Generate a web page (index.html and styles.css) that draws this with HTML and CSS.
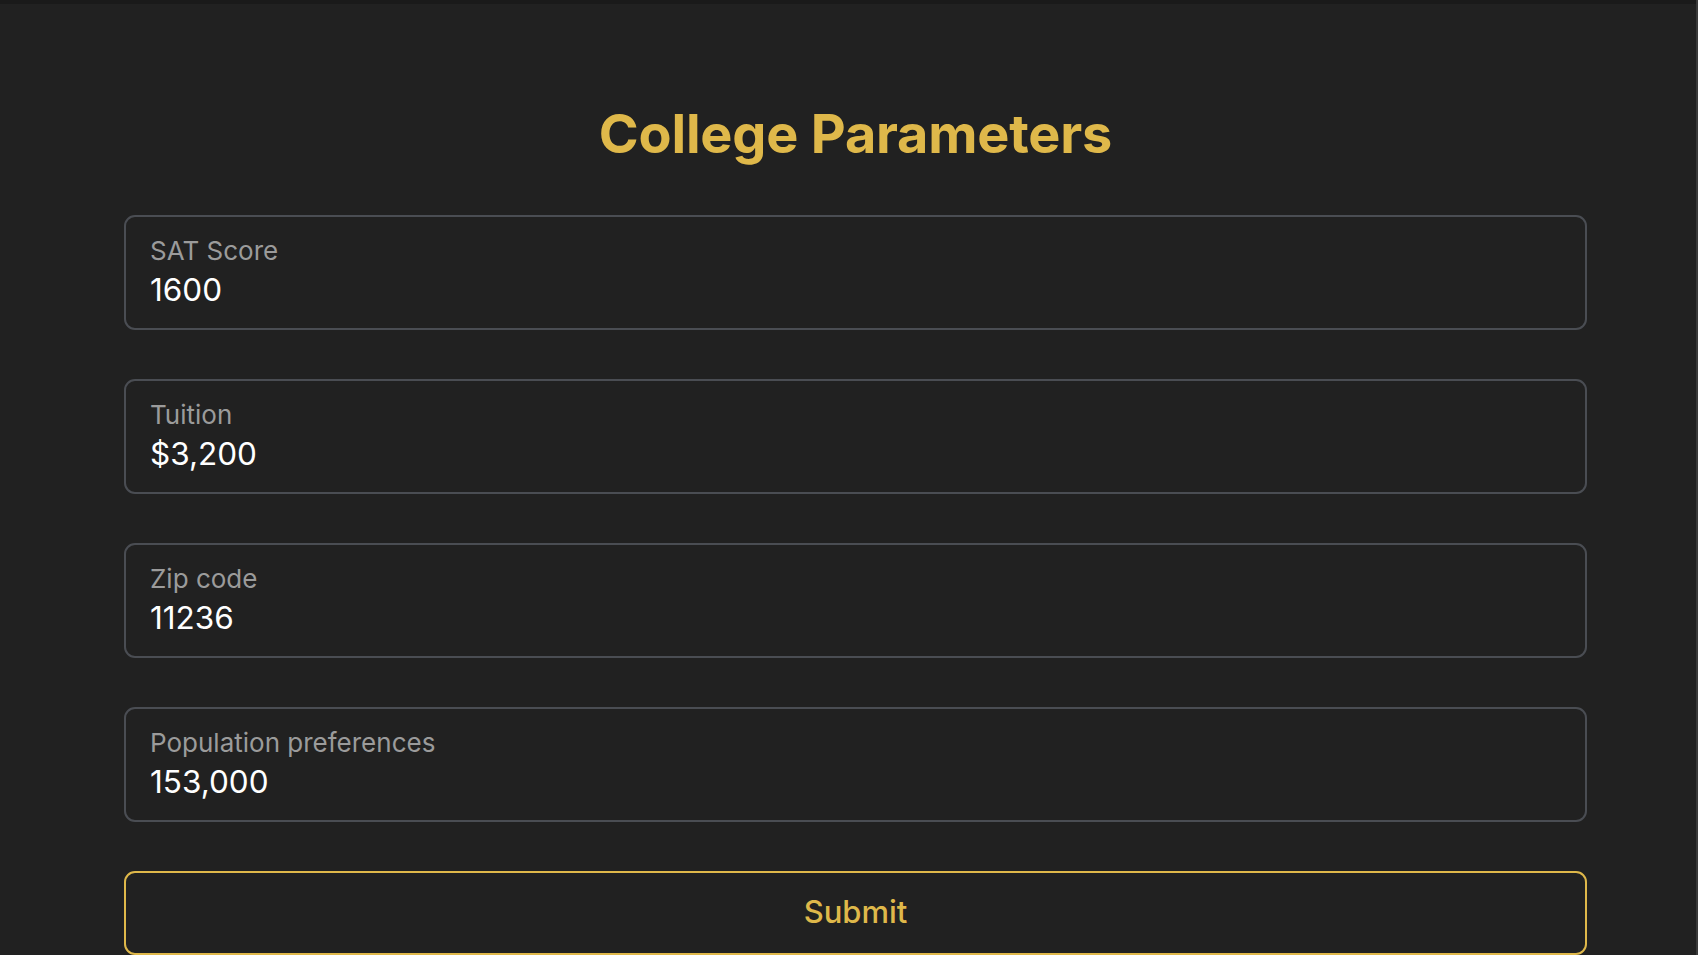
FILE: index.html
```html
<!DOCTYPE html>
<html>
<head>
<meta charset="utf-8">
<link rel="stylesheet" href="styles.css">
</head>
<body>
<div class="topbar"></div>
<main class="page">
  <h1 class="title">College Parameters</h1>
  <form class="form">
    <div class="field">
      <div class="label">SAT Score</div>
      <div class="value">1600</div>
    </div>
    <div class="field">
      <div class="label">Tuition</div>
      <div class="value">$3,200</div>
    </div>
    <div class="field">
      <div class="label">Zip code</div>
      <div class="value">11236</div>
    </div>
    <div class="field">
      <div class="label">Population preferences</div>
      <div class="value">153,000</div>
    </div>
    <button type="button" class="submit">Submit</button>
  </form>
</main>
</body>
</html>
```
FILE: styles.css
```css
html, body {
  margin: 0;
  padding: 0;
  height: 100%;
  overflow: hidden;
}
body {
  background: #212121;
  font-family: Inter, "Noto Sans", sans-serif;
  border-right: 2px solid #3a3a3a;
  box-sizing: border-box;
}
.topbar {
  height: 4px;
  background: #1a1a1a;
}
.page {
  display: flex;
  flex-direction: column;
  align-items: center;
}
.title {
  margin: 96px 0 0 15px;
  font-size: 54px;
  font-weight: 700;
  color: #dfb84a;
  line-height: 68px;
  letter-spacing: -0.2px;
}
.form {
  margin: 47px 0 0 15px;
  width: 1463px;
  display: flex;
  flex-direction: column;
  gap: 49px;
}
.field {
  box-sizing: border-box;
  height: 115px;
  border: 2px solid #4a4d53;
  border-radius: 11px;
  padding: 15px 24px;
  display: flex;
  flex-direction: column;
}
.label {
  font-size: 26px;
  line-height: 37px;
  color: #9b9b9b;
}
.value {
  font-size: 31.5px;
  line-height: 40px;
  color: #ffffff;
  margin-top: 1px;
}
.submit {
  box-sizing: border-box;
  height: 84px;
  background: transparent;
  border: 2px solid #dfb84a;
  border-radius: 11px;
  color: #dfb84a;
  font-family: Inter, "Noto Sans", sans-serif;
  font-size: 31px;
  font-weight: 500;
  padding: 0 0 4px 0;
}
```
